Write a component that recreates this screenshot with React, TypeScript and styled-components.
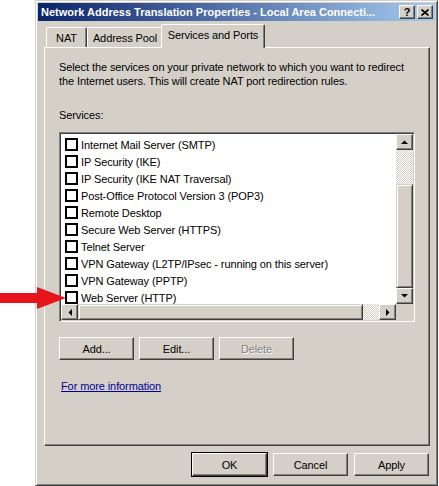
import React from "react";
import styled, { createGlobalStyle, css } from "styled-components";

const Global = createGlobalStyle`
  html, body { margin: 0; padding: 0; background: #ffffff; }
  body { font-family: "Liberation Sans", Arial, sans-serif; font-size: 11px; color: #000; letter-spacing: -0.1px; }
  * { box-sizing: border-box; }
`;

const FACE = "#d4d0c8";
const raised = css`
  background: ${FACE};
  border-top: 1px solid #ffffff;
  border-left: 1px solid #ffffff;
  border-right: 1px solid #404040;
  border-bottom: 1px solid #404040;
  box-shadow: inset -1px -1px 0 #808080;
`;

const Page = styled.div`
  position: relative;
  width: 439px;
  height: 486px;
  overflow: hidden;
`;

const Window = styled.div`
  margin-left: 35px;
  width: 403px;
  height: 486px;
  background: ${FACE};
  border-top: 1px solid ${FACE};
  border-left: 1px solid ${FACE};
  border-right: 1px solid #404040;
  border-bottom: 1px solid #404040;
  box-shadow: inset 1px 1px 0 #ffffff, inset -1px -1px 0 #808080;
  padding: 2px;
  display: flex;
  flex-direction: column;
`;

const TitleBar = styled.div`
  height: 18px;
  background: linear-gradient(to right, #0a246a, #a6caf0);
  display: flex;
  align-items: center;
  padding: 0 2px 0 3px;
`;

const TitleText = styled.div`
  flex: 1;
  color: #fff;
  font-weight: bold;
  font-size: 11px;
  letter-spacing: 0;
  white-space: nowrap;
  overflow: hidden;
`;

const CaptionButton = styled.div`
  ${raised};
  width: 16px;
  height: 14px;
  margin-left: 2px;
  display: flex;
  align-items: center;
  justify-content: center;
  font-weight: bold;
  font-size: 11px;
  line-height: 1;
`;

const Body = styled.div`
  flex: 1;
  padding: 3px 5px 0 6px;
  display: flex;
  flex-direction: column;
`;

const TabStrip = styled.div`
  height: 23px;
  display: flex;
  align-items: flex-end;
  padding-left: 2px;
  position: relative;
  z-index: 2;
`;

const Tab = styled.div<{ $active?: boolean; $w: number }>`
  width: ${(p) => p.$w}px;
  flex: none;
  background: ${FACE};
  border-top: 1px solid #fff;
  border-left: 1px solid #fff;
  border-right: 1px solid #404040;
  box-shadow: inset -1px 0 0 #808080;
  border-radius: 2px 2px 0 0;
  display: flex;
  align-items: center;
  justify-content: center;
  white-space: nowrap;
  ${(p) =>
    p.$active
      ? css`
          height: 24px;
          margin: 0 -2px -1px -2px;
          padding-bottom: 3px;
          position: relative;
          z-index: 3;
        `
      : css`
          height: 20px;
          padding-top: 1px;
        `}
`;

const Panel = styled.div`
  height: 399px;
  background: ${FACE};
  border-top: 1px solid #fff;
  border-left: 1px solid #fff;
  border-right: 1px solid #404040;
  border-bottom: 1px solid #404040;
  box-shadow: inset -1px -1px 0 #808080;
  padding: 12px 0 0 14px;
  display: flex;
  flex-direction: column;
  align-items: flex-start;
`;

const Description = styled.div`
  line-height: 14px;
  width: 360px;
`;

const Label = styled.div`
  margin-top: 20px;
  line-height: 14px;
`;

const ListBox = styled.div`
  margin-top: 10px;
  width: 356px;
  height: 190px;
  border-top: 1px solid #808080;
  border-left: 1px solid #808080;
  border-right: 1px solid #fff;
  border-bottom: 1px solid #fff;
  box-shadow: inset 1px 1px 0 #404040, inset -1px -1px 0 ${FACE};
  padding: 1px;
  display: grid;
  grid-template-columns: 1fr 17px;
  grid-template-rows: 1fr 16px;
  background: #fff;
`;

const Rows = styled.div`
  background: #fff;
  overflow: hidden;
  padding-top: 2px;
`;

const Row = styled.div`
  height: 17px;
  display: flex;
  align-items: center;
  padding-left: 4px;
  white-space: nowrap;
`;

const Check = styled.span`
  width: 13px;
  height: 13px;
  border: 2px solid #000;
  background: #fff;
  margin-right: 3px;
  flex: none;
`;

const VScroll = styled.div`
  display: flex;
  flex-direction: column;
`;

const HScroll = styled.div`
  display: flex;
`;

const ScrollBtn = styled.div`
  ${raised};
  width: 17px;
  height: 16px;
  flex: none;
  display: flex;
  align-items: center;
  justify-content: center;
`;

const Track = styled.div<{ $size: number }>`
  flex: ${(p) => (p.$size ? `0 0 ${p.$size}px` : "1")};
  background: repeating-conic-gradient(#ffffff 0 25%, ${FACE} 0 50%) 0 0 / 2px 2px;
`;

const Thumb = styled.div<{ $size: number }>`
  ${raised};
  border-top-color: ${FACE};
  border-left-color: ${FACE};
  box-shadow: inset 1px 1px 0 #fff, inset -1px -1px 0 #808080;
  flex: ${(p) => (p.$size ? `0 0 ${p.$size}px` : "1")};
`;

const Corner = styled.div`
  background: ${FACE};
`;

const ButtonRow = styled.div<{ $end?: boolean }>`
  display: flex;
  gap: 5px;
  ${(p) =>
    p.$end
      ? css`
          justify-content: flex-end;
          margin-top: 7px;
          gap: 6px;
          padding-right: 1px;
        `
      : css`
          margin-top: 15px;
        `}
`;

const Button = styled.button<{ $default?: boolean; $disabled?: boolean }>`
  font-family: "Liberation Sans", Arial, sans-serif;
  font-size: 11px;
  letter-spacing: -0.1px;
  width: 75px;
  height: 23px;
  padding: 0;
  background: ${FACE};
  color: #000;
  border-top: 1px solid #fff;
  border-left: 1px solid #fff;
  border-right: 1px solid #404040;
  border-bottom: 1px solid #404040;
  box-shadow: inset -1px -1px 0 #808080;
  ${(p) =>
    p.$default &&
    css`
      outline: 1px solid #000;
      outline-offset: 0;
    `}
  ${(p) =>
    p.$disabled &&
    css`
      color: #808080;
      text-shadow: 1px 1px 0 #fff;
    `}
`;

const Link = styled.a`
  margin-top: 20px;
  margin-left: 2px;
  color: #000099;
  text-decoration: underline;
  cursor: pointer;
`;

const Arrow = styled.svg`
  position: absolute;
  left: 0;
  top: 287px;
`;

const Tri = ({ dir }: { dir: "up" | "down" | "left" | "right" }) => {
  const pts = {
    up: "0,4 7,4 3.5,0.5",
    down: "0,0 7,0 3.5,3.5",
    left: "4,0 4,7 0.5,3.5",
    right: "0,0 0,7 3.5,3.5",
  }[dir];
  const horiz = dir === "left" || dir === "right";
  return (
    <svg width={horiz ? 4 : 7} height={horiz ? 7 : 4} viewBox={horiz ? "0 0 4 7" : "0 0 7 4"}>
      <polygon points={pts} fill="#000" />
    </svg>
  );
};

const services = [
  "Internet Mail Server (SMTP)",
  "IP Security (IKE)",
  "IP Security (IKE NAT Traversal)",
  "Post-Office Protocol Version 3 (POP3)",
  "Remote Desktop",
  "Secure Web Server (HTTPS)",
  "Telnet Server",
  "VPN Gateway (L2TP/IPsec - running on this server)",
  "VPN Gateway (PPTP)",
  "Web Server (HTTP)",
];

export default function App() {
  return (
    <Page>
      <Global />
      <Window>
        <TitleBar>
          <TitleText>Network Address Translation Properties - Local Area Connecti...</TitleText>
          <CaptionButton>?</CaptionButton>
          <CaptionButton>
            <svg width="8" height="7" viewBox="0 0 8 7">
              <path d="M0.5 0.5 L7.5 6.5 M7.5 0.5 L0.5 6.5" stroke="#000" strokeWidth="1.6" />
            </svg>
          </CaptionButton>
        </TitleBar>
        <Body>
          <TabStrip>
            <Tab $w={41}>NAT</Tab>
            <Tab $w={76}>Address Pool</Tab>
            <Tab $w={104} $active>
              Services and Ports
            </Tab>
          </TabStrip>
          <Panel>
            <Description>
              Select the services on your private network to which you want to redirect the
              Internet users. This will create NAT port redirection rules.
            </Description>
            <Label>Services:</Label>
            <ListBox>
              <Rows>
                {services.map((s) => (
                  <Row key={s}>
                    <Check />
                    {s}
                  </Row>
                ))}
              </Rows>
              <VScroll>
                <ScrollBtn>
                  <Tri dir="up" />
                </ScrollBtn>
                <Track $size={34} />
                <Thumb $size={0} />
                <ScrollBtn>
                  <Tri dir="down" />
                </ScrollBtn>
              </VScroll>
              <HScroll>
                <ScrollBtn>
                  <Tri dir="left" />
                </ScrollBtn>
                <Thumb $size={0} />
                <Track $size={16} />
                <ScrollBtn>
                  <Tri dir="right" />
                </ScrollBtn>
              </HScroll>
              <Corner />
            </ListBox>
            <ButtonRow>
              <Button>Add...</Button>
              <Button>Edit...</Button>
              <Button $disabled>Delete</Button>
            </ButtonRow>
            <Link>For more information</Link>
          </Panel>
          <ButtonRow $end>
            <Button $default>OK</Button>
            <Button>Cancel</Button>
            <Button>Apply</Button>
          </ButtonRow>
        </Body>
      </Window>
      <Arrow width="66" height="22" viewBox="0 0 66 22">
        <polygon points="0,6 37,6 37,0 66,11 37,22 37,16 0,16" fill="#e8141b" />
      </Arrow>
    </Page>
  );
}
